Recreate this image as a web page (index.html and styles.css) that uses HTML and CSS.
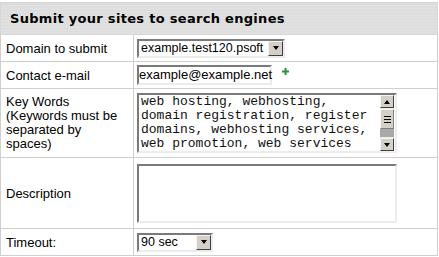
FILE: index.html
```html
<!DOCTYPE html>
<html lang="en">
<head>
  <meta charset="UTF-8">
  <title>Submit your sites to search engines</title>
  <link rel="stylesheet" href="styles.css">
</head>
<body>
  <table class="form-table">
    <colgroup>
      <col class="col-label">
      <col>
    </colgroup>
    <tr>
      <th class="header" colspan="2">Submit your sites to search engines</th>
    </tr>
    <tr class="row-short">
      <td class="label">Domain to submit</td>
      <td class="field">
        <div class="select select-domain">
          <span class="select-value">example.test120.psoft</span>
          <span class="arrow-btn"><span class="tri-down"></span></span>
        </div>
      </td>
    </tr>
    <tr class="row-short">
      <td class="label">Contact e-mail</td>
      <td class="field">
        <div class="field-line">
          <div class="input input-email">example@example.net</div>
          <svg class="plus" width="7" height="7" viewBox="0 0 7 7">
            <rect x="2.5" y="0" width="2" height="7" fill="#23963a"/>
            <rect x="0" y="2.5" width="7" height="2" fill="#23963a"/>
          </svg>
        </div>
      </td>
    </tr>
    <tr class="row-keywords">
      <td class="label label-tall">Key Words<br>(Keywords must be separated by spaces)</td>
      <td class="field">
        <div class="textarea">
          <div class="textarea-text">web hosting, webhosting,<br>domain registration, register<br>domains, webhosting services,<br>web promotion, web services</div>
          <div class="scrollbar">
            <span class="arrow-btn scroll-btn"><span class="tri-up"></span></span>
            <span class="thumb"><span class="grip"></span></span>
            <span class="track-dark"></span>
            <span class="arrow-btn scroll-btn"><span class="tri-down"></span></span>
          </div>
        </div>
      </td>
    </tr>
    <tr class="row-desc">
      <td class="label">Description</td>
      <td class="field">
        <div class="textarea textarea-empty"></div>
      </td>
    </tr>
    <tr class="row-short">
      <td class="label">Timeout:</td>
      <td class="field">
        <div class="select select-timeout">
          <span class="select-value">90 sec</span>
          <span class="arrow-btn"><span class="tri-down"></span></span>
        </div>
      </td>
    </tr>
  </table>
</body>
</html>
```

FILE: styles.css
```css
body {
  margin: 0;
  font-family: 'Liberation Sans', Arial, sans-serif;
  font-size: 13px;
  color: #000;
  background: #fff;
}
.form-table {
  width: 438px;
  margin-top: 2px;
  border-collapse: collapse;
  table-layout: fixed;
}
.col-label {
  width: 133px;
}
.header {
  height: 31px;
  padding: 0 0 0 9px;
  text-align: left;
  font-family: 'DejaVu Sans', Verdana, sans-serif;
  font-size: 13px;
  font-weight: bold;
  letter-spacing: 0.3px;
  border: 1px solid #d6d6d6;
  background: repeating-linear-gradient(#dcdcdc 0, #dcdcdc 2px, #e4e4e4 2px, #e4e4e4 3px);
}
td {
  border: 1px solid #cfcfcf;
  vertical-align: middle;
}
.label {
  padding: 0 5px;
  line-height: 15px;
}
.label-tall {
  line-height: 14px;
}
.field {
  padding: 0 3px;
}
.row-short td {
  height: 26px;
}
.row-keywords td {
  height: 68px;
}
.row-desc td {
  height: 70px;
}
.select,
.input,
.textarea {
  box-sizing: border-box;
  border-style: solid;
  border-width: 2px;
  border-color: #7a7a7a #ececec #ececec #7a7a7a;
  background: #fff;
}
.select {
  display: flex;
  align-items: center;
  height: 19px;
}
.select-domain {
  width: 148px;
}
.select-timeout {
  width: 76px;
}
.select-value {
  flex: 1;
  padding-left: 2px;
  font-size: 12.5px;
  white-space: nowrap;
  overflow: hidden;
}
.arrow-btn {
  box-sizing: border-box;
  display: flex;
  align-items: center;
  justify-content: center;
  width: 15px;
  height: 15px;
  background: #d4d0c8;
  border-style: solid;
  border-width: 1px;
  border-color: #f4f4f4 #404040 #404040 #f4f4f4;
}
.tri-down,
.tri-up {
  width: 0;
  height: 0;
  border-left: 3.5px solid transparent;
  border-right: 3.5px solid transparent;
}
.tri-down {
  border-top: 4px solid #000;
}
.tri-up {
  border-bottom: 4px solid #000;
}
.field-line {
  display: flex;
  align-items: flex-start;
}
.input-email {
  width: 135px;
  height: 20px;
  line-height: 16px;
  white-space: nowrap;
}
.plus {
  margin: 3px 0 0 10px;
}
.textarea {
  display: flex;
  width: 260px;
  height: 60px;
}
.textarea-text {
  flex: 1;
  padding: 0 0 0 2px;
  font-family: 'Liberation Mono', 'Courier New', monospace;
  font-size: 13px;
  line-height: 14px;
  color: #111;
  white-space: nowrap;
  overflow: hidden;
}
.scrollbar {
  display: flex;
  flex-direction: column;
  width: 14px;
  margin-right: 1px;
  background: #ebebeb;
}
.scroll-btn {
  width: 14px;
  height: 13px;
}
.thumb {
  box-sizing: border-box;
  display: flex;
  align-items: center;
  justify-content: center;
  height: 20px;
  margin-top: 1px;
  background: #d4d0c8;
  border-style: solid;
  border-width: 1px;
  border-color: #f4f4f4 #808080 #808080 #f4f4f4;
}
.grip {
  width: 7px;
  height: 5px;
  border-top: 1px solid #000;
  border-bottom: 1px solid #000;
  background: linear-gradient(transparent 2px, #000 2px, #000 3px, transparent 3px);
}
.track-dark {
  height: 8px;
  background: #a9a9a9;
}
.scroll-btn:last-child {
  margin-top: auto;
}
.textarea-empty {
  display: block;
  height: 59px;
}
```
